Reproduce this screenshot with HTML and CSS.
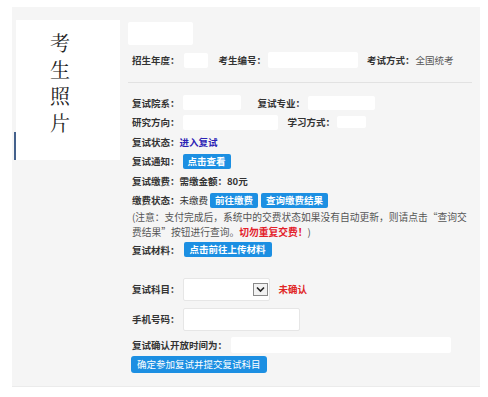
FILE: index.html
```html
<!DOCTYPE html>
<html lang="zh">
<head>
<meta charset="utf-8">
<link rel="stylesheet" href="styles.css">
</head>
<body>
<div class="panel">
  <div class="photo-col">
    <div class="bar"></div>
    <div class="photo">考<br>生<br>照<br>片</div>
  </div>
  <div class="main">
    <div class="top-box"></div>
    <div class="row row1">
      <span class="lbl">招生年度：</span>
      <span class="box b-year"></span>
      <span class="lbl l-no">考生编号：</span>
      <span class="box b-no"></span>
      <span class="lbl l-way">考试方式：</span>
      <span class="val">全国统考</span>
    </div>
    <div class="divider"></div>
    <div class="row r">
      <span class="lbl">复试院系：</span>
      <span class="box b-dept"></span>
      <span class="lbl l-major">复试专业：</span>
      <span class="box b-major"></span>
    </div>
    <div class="row r">
      <span class="lbl">研究方向：</span>
      <span class="box b-dir"></span>
      <span class="lbl l-study">学习方式：</span>
      <span class="box b-study"></span>
    </div>
    <div class="row r">
      <span class="lbl">复试状态：</span><span class="link">进入复试</span>
    </div>
    <div class="row r">
      <span class="lbl">复试通知：</span><span class="btn b1">点击查看</span>
    </div>
    <div class="row r">
      <span class="lbl">复试缴费：需缴金额：80元</span>
    </div>
    <div class="row r">
      <span class="lbl">缴费状态：</span><span class="plain">未缴费</span><span class="btn b2">前往缴费</span><span class="btn b3">查询缴费结果</span>
    </div>
    <p class="note">(注意：支付完成后，系统中的交费状态如果没有自动更新，则请点击“查询交<br>费结果”按钮进行查询。<span class="warn">切勿重复交费！</span>)</p>
    <div class="row r">
      <span class="lbl">复试材料：</span><span class="btn b4">点击前往上传材料</span>
    </div>
    <div class="row r-field r-subj">
      <span class="lbl">复试科目：</span>
      <span class="select"><span class="arrow"><svg width="9" height="7" viewBox="0 0 9 7"><path d="M1 1.5 L4.5 5 L8 1.5" fill="none" stroke="#222" stroke-width="1.6"/></svg></span></span>
      <span class="red">未确认</span>
    </div>
    <div class="row r-field r-phone">
      <span class="lbl">手机号码：</span>
      <span class="input"></span>
    </div>
    <div class="row r-time">
      <span class="lbl">复试确认开放时间为：</span>
      <span class="box b-time"></span>
    </div>
    <div class="row r-submit">
      <span class="btn submit">确定参加复试并提交复试科目</span>
    </div>
  </div>
</div>
</body>
</html>
```
FILE: styles.css
```css
html, body {
  margin: 0;
  padding: 0;
  background: #ffffff;
}
body {
  width: 488px;
  height: 397px;
  overflow: hidden;
  font-family: "Noto Sans CJK SC", "Noto Sans", sans-serif;
  color: #333;
}
.panel {
  margin: 7px 0 0 12px;
  width: 468px;
  height: 380px;
  background: #f5f5f5;
  border-bottom: 1px solid #ebebeb;
  display: flex;
  box-sizing: border-box;
  padding: 13px 0 0 2px;
}
.photo-col {
  display: flex;
  align-items: flex-end;
  height: 140px;
}
.bar {
  width: 2px;
  height: 28px;
  background: #44618c;
}
.photo {
  width: 104px;
  height: 140px;
  box-sizing: border-box;
  background: #fff;
  padding: 10px 0 0 34px;
  font-size: 20px;
  line-height: 26.5px;
  color: #222;
  font-family: "Noto Serif CJK SC", "Noto Sans CJK SC", serif;
}
.main {
  margin-left: 8px;
  padding-top: 2px;
  width: 344px;
  font-size: 9.5px;
}
.top-box {
  width: 65px;
  height: 23px;
  background: #fff;
  border-radius: 2px;
}
.row {
  display: flex;
  align-items: center;
  padding-left: 4px;
  white-space: nowrap;
}
.lbl {
  font-weight: bold;
  color: #333;
}
.box {
  display: inline-block;
  background: #fff;
  border-radius: 2px;
}
.row1 {
  margin-top: 7px;
  height: 16px;
}
.b-year { width: 24px; height: 15px; margin-left: 4px; }
.l-no { margin-left: 11px; }
.b-no { width: 90px; height: 16px; margin-left: 2px; }
.l-way { margin-left: 9px; }
.val { color: #555; margin-left: 1px; }
.divider {
  margin-top: 14px;
  border-top: 1px solid #e2e2e2;
  width: 344px;
}
.r {
  height: 19.5px;
}
.divider + .r { margin-top: 10px; }
.b-dept { width: 58px; height: 15px; margin-left: 3px; }
.l-major { margin-left: 17px; }
.b-major { width: 67px; height: 14px; margin-left: 3px; }
.b-dir { width: 95px; height: 15px; margin-left: 3px; }
.l-study { margin-left: 10px; }
.b-study { width: 29px; height: 12px; margin-left: 2px; }
.link {
  color: #2a22b4;
  font-weight: bold;
}
.btn {
  display: inline-block;
  background: #1c8fe2;
  color: #fff;
  font-weight: bold;
  border-radius: 2px;
  height: 15px;
  line-height: 15px;
  padding: 0 5px;
}
.b1 { margin-left: 3px; }
.plain { color: #333; }
.b2 { margin-left: 2px; }
.b3 { margin-left: 3px; }
.b4 { margin-left: 4px; padding: 0 6px; }
.note {
  margin: 0;
  padding-left: 4px;
  font-size: 9.75px;
  line-height: 15px;
  color: #555;
  white-space: nowrap;
}
.warn {
  color: #e3202a;
  font-weight: bold;
}
.r-field {
  height: 23px;
}
.r-subj { margin-top: 18px; }
.r-phone { margin-top: 7px; }
.select {
  display: inline-flex;
  align-items: center;
  justify-content: flex-end;
  width: 87px;
  height: 23px;
  box-sizing: border-box;
  background: #fff;
  border: 1px solid #e6e6e6;
  border-radius: 2px;
  margin-left: 3px;
  padding-right: 1px;
}
.arrow {
  display: inline-flex;
  align-items: center;
  justify-content: center;
  width: 15px;
  height: 13px;
  box-sizing: border-box;
  border: 1px solid #8a8a8a;
  background: #f2f2f2;
}
.red {
  color: #e02424;
  font-weight: bold;
  margin-left: 9px;
}
.input {
  display: inline-block;
  width: 117px;
  height: 23px;
  box-sizing: border-box;
  background: #fff;
  border: 1px solid #e6e6e6;
  border-radius: 2px;
  margin-left: 3px;
}
.r-time {
  margin-top: 5px;
  height: 18px;
}
.b-time { width: 220px; height: 16px; margin-left: 4px; }
.r-submit {
  margin-top: 2px;
  height: 18px;
  padding-left: 3px;
}
.submit {
  height: 17px;
  line-height: 17px;
  font-weight: normal;
  padding: 0 6px;
  border-radius: 3px;
}
```
